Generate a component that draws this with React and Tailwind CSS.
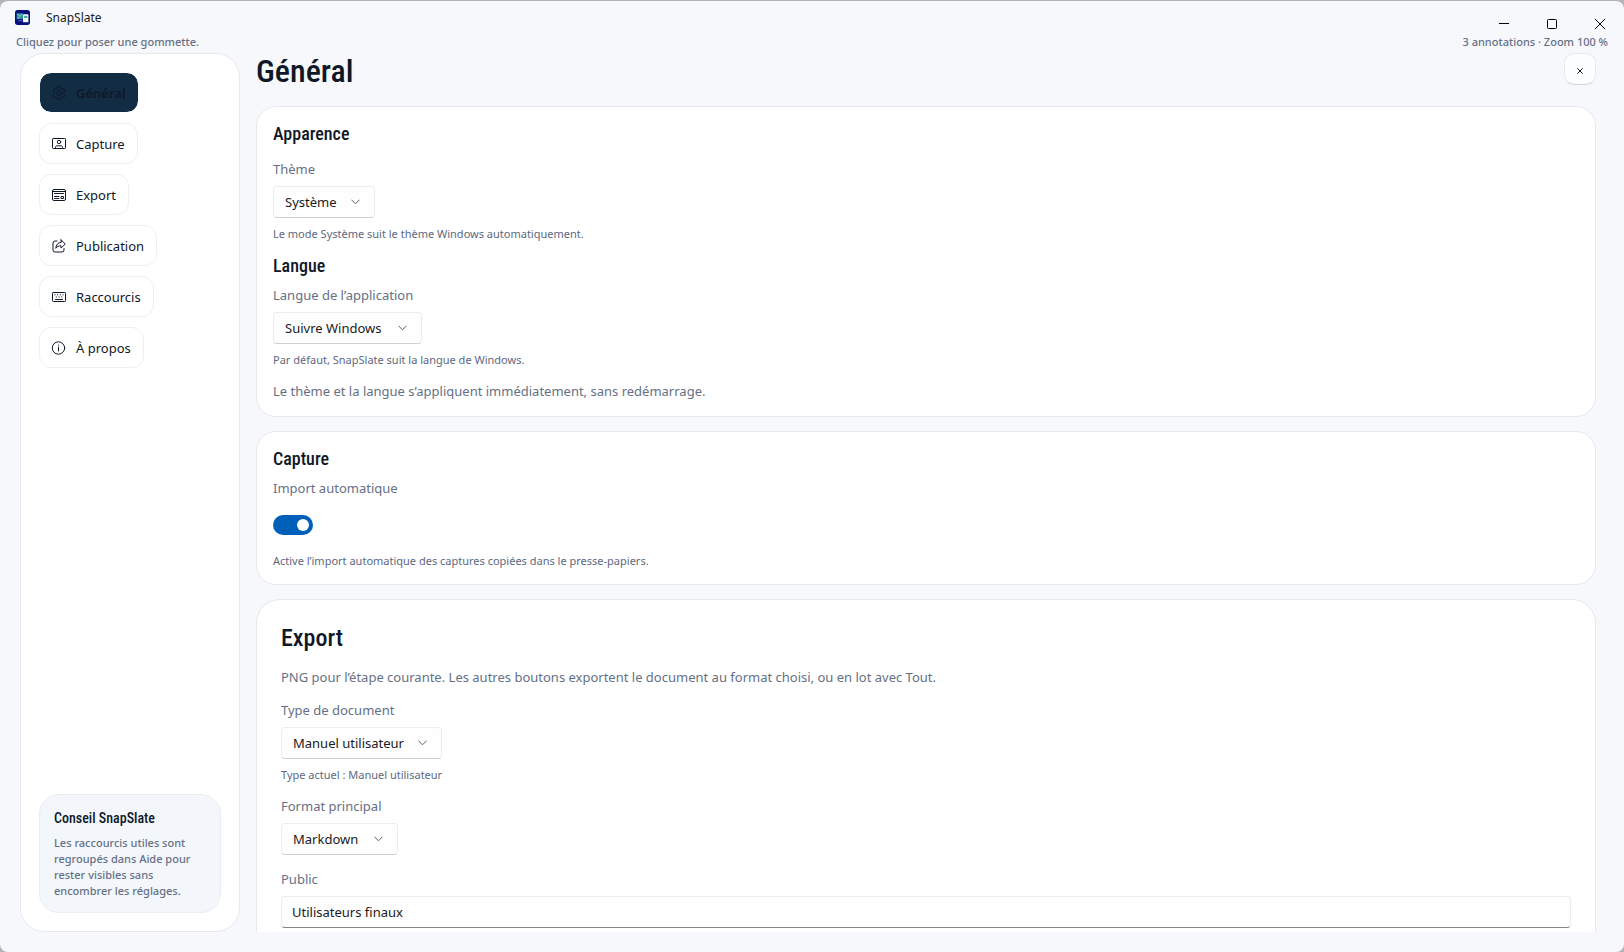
import React from "react";

const label = "block text-[13px] leading-5 text-[#667085]";
const hint = "text-[11px] leading-4 text-[#5d6880]";
const heading = "font-['Roboto_Condensed','Liberation_Sans_Narrow',Roboto,sans-serif] font-medium text-[#101828]";

const stroke = { width: 16, height: 16, viewBox: "0 0 16 16", fill: "none", stroke: "currentColor", strokeWidth: 1, strokeLinecap: "round", strokeLinejoin: "round" };

const icons = {
  general: (
    <svg {...stroke} aria-hidden="true">
      <path d="M6.7 1.5h2.6l.4 1.9 1.2.7 1.9-.6 1.3 2.2-1.5 1.3v1.9l1.5 1.3-1.3 2.3-1.9-.6-1.2.7-.4 1.9H6.7l-.4-1.9-1.2-.7-1.9.6-1.3-2.3 1.5-1.3V7L1.9 5.7l1.3-2.2 1.9.6 1.2-.7z" />
      <circle cx="8" cy="8" r="2.2" />
    </svg>
  ),
  capture: (
    <svg {...stroke} aria-hidden="true">
      <rect x="1.5" y="2.5" width="13" height="10" rx=".8" />
      <circle cx="8" cy="6" r="1.7" />
      <path d="M4.500 12.300v-1c0-1 .7-1.500 1.500-1.500h4c.8 0 1.500.5 1.500 1.500v1" />
    </svg>
  ),
  export: (
    <svg {...stroke} aria-hidden="true">
      <rect x="1.5" y="2.5" width="13" height="11" rx="1.5" />
      <path d="M1.500 4.500h13M3.500 6.500h9M3.500 9.500h4.500M3.500 11.500h4.500" />
      <rect x="10.5" y="9.500" width="2" height="2" />
    </svg>
  ),
  publication: (
    <svg {...stroke} aria-hidden="true">
      <path d="M6 3H4a2 2 0 0 0-2 2v7a2 2 0 0 0 2 2h7a2 2 0 0 0 2-2v-1.500" />
      <path d="M10 1.800 14.300 6 10 10V7.800C7.600 7.700 6 8.600 4.800 10.300 5 7 6.800 4.500 10 4.200z" />
    </svg>
  ),
  raccourcis: (
    <svg {...stroke} aria-hidden="true">
      <rect x="1.5" y="3.5" width="13" height="9" rx=".8" />
      <path d="M3.800 5.800h.3M6.500 5.800h.3M9.200 5.800h.3M11.900 5.800h.3M5.200 8h.3M7.900 8h.3M10.600 8h.3M4.500 10.500h7" />
    </svg>
  ),
  apropos: (
    <svg {...stroke} aria-hidden="true">
      <circle cx="7.500" cy="8" r="6.200" />
      <path d="M7.500 7v4M7.500 5v.2" />
    </svg>
  ),
};

const nav = [
  ["general", "Général"],
  ["capture", "Capture"],
  ["export", "Export"],
  ["publication", "Publication"],
  ["raccourcis", "Raccourcis"],
  ["apropos", "À propos"],
];

function Choice({ id, title, value, width }) {
  return (
    <>
      <label htmlFor={id} className={label}>{title}</label>
      <div className={`relative mt-[7px] ${width}`}>
        <select
          id={id}
          defaultValue={value}
          className="block h-8 w-full appearance-none rounded-[4px] border border-[#ececec] border-b-[#d0d0d0] bg-[#fefefe] pl-[11px] pr-8 text-[13px] leading-5 text-[#1b1b1b]"
        >
          <option>{value}</option>
        </select>
        <svg className="pointer-events-none absolute right-[15px] top-3" width="9" height="8" viewBox="0 0 9 8" fill="none" stroke="#5f5f5f" strokeLinecap="round" strokeLinejoin="round" aria-hidden="true">
          <path d="M.7 2l3.800 3.800L8.300 2" />
        </svg>
      </div>
    </>
  );
}

export default function App() {
  return (
    <div className="h-screen bg-[#b4b4b4] font-['Noto_Sans',sans-serif]">
      <div className="flex h-full flex-col overflow-hidden rounded-lg border-t border-[#b0b0b4] bg-[#f6f8fc]">
        <header className="flex h-[52px] shrink-0 flex-col pl-4">
          <div className="flex h-8 items-center">
            <svg width="15" height="15" viewBox="0 0 14 14" className="-ml-px" aria-hidden="true">
              <rect width="14" height="14" rx="2.500" fill="#06107c" />
              <rect x="1.500" y="3" width="6" height="5.500" fill="#2f8f9a" />
              <path d="M2 4l3 1.500L7 4M2 8l3-2" stroke="#8fd3c4" strokeWidth=".8" fill="none" />
              <rect x="3" y="9.500" width="4" height="1" fill="#4d6bc0" />
              <rect x="7.500" y="4" width="5" height="7.500" rx=".6" fill="#f0f8f4" />
              <rect x="8.500" y="5.500" width="3" height="2" fill="#3fae8c" />
            </svg>
            <span className="ml-4 pt-px text-[12px] leading-4 text-[#1b1b1b]">SnapSlate</span>
            <div className="ml-auto flex self-stretch pt-[13px] text-black">
              <button type="button" aria-label="Réduire" className="flex w-12 items-center justify-center">
                <svg width="10" height="10" viewBox="0 0 10 10" stroke="currentColor" aria-hidden="true"><path d="M0 4.500h10" /></svg>
              </button>
              <button type="button" aria-label="Agrandir" className="flex w-12 items-center justify-center">
                <svg width="10" height="10" viewBox="0 0 10 10" fill="none" stroke="currentColor" aria-hidden="true"><rect x=".5" y=".5" width="9" height="9" rx="1" /></svg>
              </button>
              <button type="button" aria-label="Fermer" className="flex w-12 items-center justify-center">
                <svg width="10" height="10" viewBox="0 0 10 10" stroke="currentColor" aria-hidden="true"><path d="M0 0l10 10M10 0L0 10" /></svg>
              </button>
            </div>
          </div>
          <div className="flex items-center justify-between pr-4 text-[11px] leading-4 font-medium text-[#667085]">
            <p className="pt-px">Cliquez pour poser une gommette.</p>
            <p className="pt-px">3 annotations · Zoom 100 %</p>
          </div>
        </header>

        <div className="flex min-h-0 flex-1 gap-4 pr-7 pb-5 pl-5">
          <aside className="flex w-[220px] shrink-0 flex-col rounded-3xl border border-[#e6e8ed] bg-white px-[18px] py-[18px]">
            <nav className="flex flex-col items-start gap-[10px]">
              {nav.map(([key, text]) => (
                <button
                  key={key}
                  type="button"
                  className={
                    "flex h-[41px] items-center gap-[9px] rounded-xl border pr-3 pl-[11px] text-[13px] leading-5 text-[#101828] " +
                    (key === "general" ? "border-white bg-[#122c44] bg-clip-padding font-semibold text-[#101b2b]" : "border-[#eeeff1] bg-white")
                  }
                >
                  {icons[key]}
                  {text}
                </button>
              ))}
            </nav>
            <section className="mt-auto rounded-[20px] border border-[#e9edf2] bg-[#f3f7fc] px-[14px] pt-[14px] pb-[13px]">
              <h2 className={heading + " text-[14px] leading-[18px]"}>Conseil SnapSlate</h2>
              <p className="mt-2 text-[11px] leading-4 font-medium text-[#667085]">
                Les raccourcis utiles sont regroupés dans Aide pour rester visibles sans encombrer les réglages.
              </p>
            </section>
          </aside>

          <main className="flex min-w-0 flex-1 flex-col">
            <div className="flex h-[53px] shrink-0 items-start justify-between">
              <h1 className={heading + " text-[32px] leading-9"}>Général</h1>
              <button type="button" aria-label="Fermer les réglages" className="flex size-8 items-center justify-center rounded-[10px] border border-[#e8e9ec] border-b-[#d3d4d8] bg-[#fcfdfe] text-[#1b1b1b]">
                <svg width="6" height="6" viewBox="0 0 6 6" className="mt-1" stroke="currentColor" aria-hidden="true"><path d="M.3 .3l5.400 5.400M5.700 .3L.3 5.700" /></svg>
              </button>
            </div>

            <div className="flex min-h-0 flex-1 flex-col gap-[14px] overflow-y-auto [scrollbar-width:none]">
              <section className="shrink-0 rounded-[20px] border border-[#e6e8ed] bg-white px-4 pt-4 pb-[15px]">
                <h2 className={heading + " mb-[14px] text-[18px] leading-[22px]"}>Apparence</h2>
                <Choice id="theme" title="Thème" value="Système" width="w-[102px]" />
                <p className={hint + " mt-2"}>Le mode Système suit le thème Windows automatiquement.</p>
                <h2 className={heading + " mt-[13px] mb-2 text-[18px] leading-[22px]"}>Langue</h2>
                <Choice id="langue" title="Langue de l’application" value="Suivre Windows" width="w-[149px]" />
                <p className={hint + " mt-2"}>Par défaut, SnapSlate suit la langue de Windows.</p>
                <p className={label + " mt-[13px]"}>Le thème et la langue s’appliquent immédiatement, sans redémarrage.</p>
              </section>

              <section className="shrink-0 rounded-[20px] border border-[#e6e8ed] bg-white px-4 pt-4 pb-[15px]">
                <h2 className={heading + " mb-2 text-[18px] leading-[22px]"}>Capture</h2>
                <label htmlFor="import" className={label}>Import automatique</label>
                <input
                  id="import"
                  type="checkbox"
                  role="switch"
                  defaultChecked
                  className="mt-[17px] mb-[18px] flex h-5 w-10 appearance-none items-center rounded-full bg-[#8a8a8a] px-1 before:block before:size-3 before:rounded-full before:bg-white checked:justify-end checked:bg-[#005fb8]"
                />
                <p className={hint}>Active l’import automatique des captures copiées dans le presse-papiers.</p>
              </section>

              <section className="shrink-0 rounded-t-3xl border border-[#e6e8ed] bg-white p-6">
                <h2 className={heading + " text-[24px] leading-7"}>Export</h2>
                <p className={label + " mt-[15px] mb-[13px]"}>PNG pour l’étape courante. Les autres boutons exportent le document au format choisi, ou en lot avec Tout.</p>
                <Choice id="type" title="Type de document" value="Manuel utilisateur" width="w-[161px]" />
                <p className={hint + " mt-2 mb-[13px]"}>Type actuel : Manuel utilisateur</p>
                <Choice id="format" title="Format principal" value="Markdown" width="w-[117px]" />
                <label htmlFor="public" className={label + " mt-[14px]"}>Public</label>
                <input
                  id="public"
                  type="text"
                  defaultValue="Utilisateurs finaux"
                  className="mt-[7px] block h-8 w-full rounded-[4px] border border-[#ececec] border-b-[#868686] bg-[#fefefe] px-[10px] text-[13px] leading-5 text-[#1b1b1b]"
                />
              </section>
            </div>
          </main>
        </div>
      </div>
    </div>
  );
}
